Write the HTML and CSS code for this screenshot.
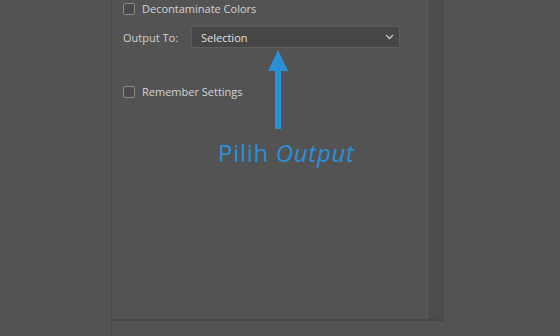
FILE: index.html
```html
<!DOCTYPE html>
<html lang="en">
<head>
  <meta charset="UTF-8">
  <title>Output Settings</title>
  <link rel="stylesheet" href="styles.css">
</head>
<body>
  <div class="panel">
    <div class="content">
      <label class="check-row">
        <span class="box"></span>
        Decontaminate Colors
      </label>
      <div class="output-row">
        <span class="label">Output To:</span>
        <div class="select">
          <span>Selection</span>
          <svg class="chevron" width="9" height="6" viewBox="0 0 9 6">
            <path d="M1 1 L4.5 4.5 L8 1" fill="none" stroke="#c8c8c8" stroke-width="1.3"/>
          </svg>
        </div>
      </div>
      <label class="check-row remember">
        <span class="box"></span>
        Remember Settings
      </label>
    </div>
    <div class="scrollbar"></div>
  </div>
  <div class="footer"></div>

  <!-- annotation over the dialog -->
  <svg class="arrow" width="22" height="80" viewBox="0 0 22 80">
    <path d="M11 0 L21 21 L14 21 L14 79 L8 79 L8 21 L1 21 Z" fill="#2a90d8"/>
  </svg>
  <div class="note">Pilih <em>Output</em></div>
</body>
</html>
```

FILE: styles.css
```css
body {
  margin: 0;
  background: #535353;
  font-family: 'Open Sans', sans-serif;
  width: 560px;
  height: 336px;
  overflow: hidden;
  position: relative;
}
.panel {
  margin-left: 111px;
  width: 332px;
  height: 319px;
  display: flex;
  border-left: 1px solid #484848;
  border-bottom: 2px solid #474747;
}
.content {
  flex: 1;
  padding: 2px 0 0 11px;
  border-right: 1px solid #5a5a5a;
}
.scrollbar {
  width: 16px;
  background: #4c4c4c;
}
.footer {
  margin-left: 111px;
  height: 20px;
  border-left: 1px solid #484848;
}
.check-row {
  display: flex;
  align-items: center;
  gap: 7px;
  color: #d4d4d4;
  font-size: 11px;
  height: 13px;
}
.box {
  width: 10px;
  height: 10px;
  border: 1px solid #8a8a8a;
  border-radius: 2px;
  background: #4a4a4a;
}
.output-row {
  display: flex;
  align-items: center;
  margin-top: 11px;
  height: 22px;
}
.label {
  color: #cfcfcf;
  font-size: 11px;
  width: 68px;
}
.select {
  width: 193px;
  height: 20px;
  background: #464646;
  border: 1px solid #5e5e5e;
  border-radius: 2px;
  display: flex;
  align-items: center;
  justify-content: space-between;
  padding: 0 5px 0 9px;
  color: #e2e2e2;
  font-size: 11px;
}
.remember {
  margin-top: 37px;
}
.arrow {
  position: absolute;
  left: 267px;
  top: 50px;
}
.note {
  position: absolute;
  left: 218px;
  top: 136px;
  color: #2a90d8;
  font-size: 24px;
  letter-spacing: 0.7px;
}
```
